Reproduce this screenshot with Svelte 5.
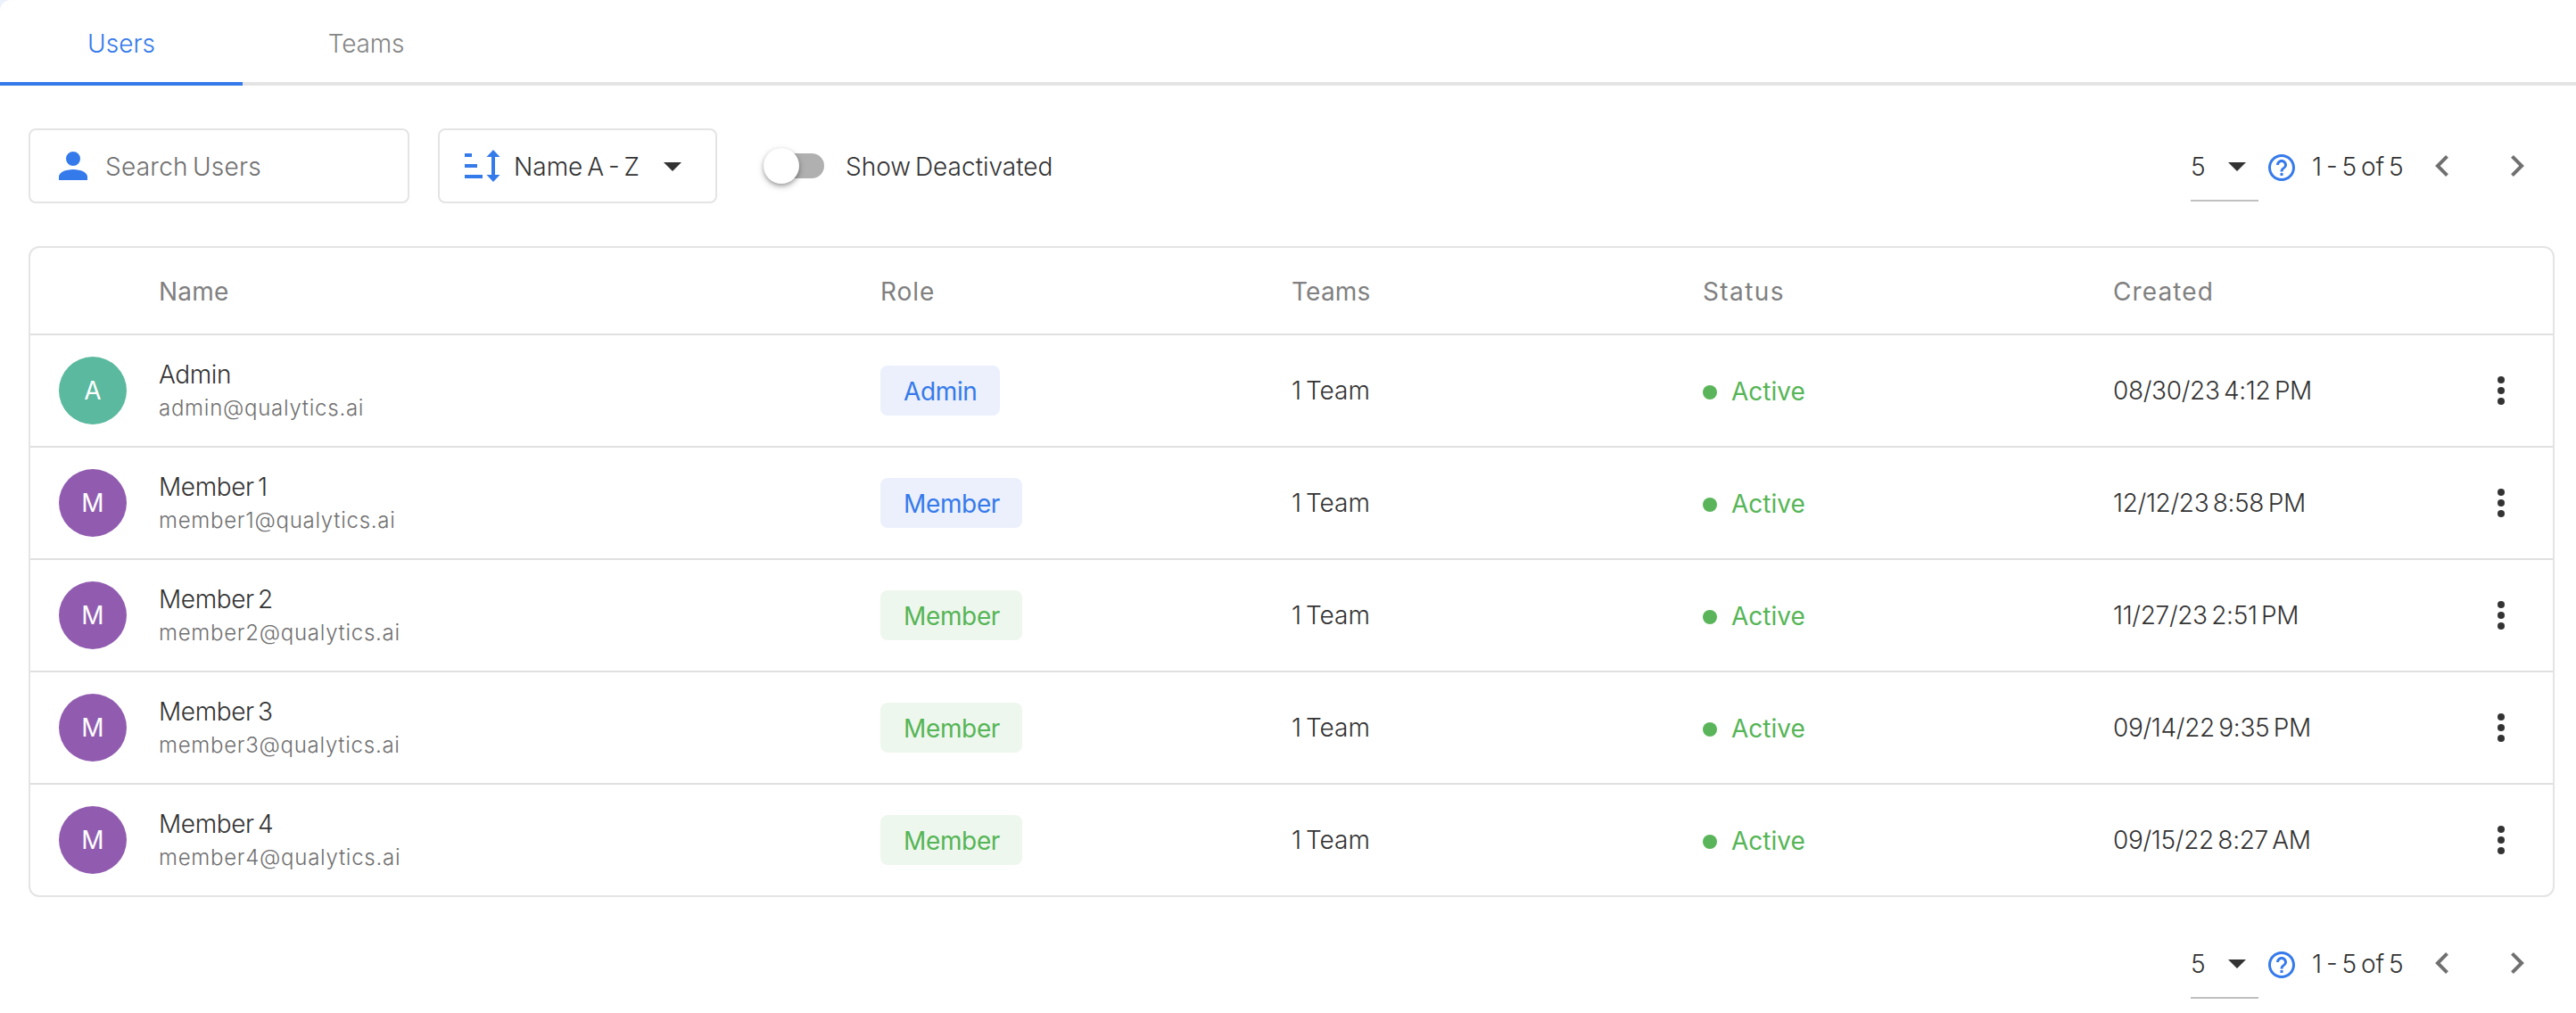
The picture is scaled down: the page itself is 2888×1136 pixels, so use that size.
<script>
  const columns = ['Name', 'Role', 'Teams', 'Status', 'Created'];
  const users = [
    { name: 'Admin', email: 'admin@qualytics.ai', initial: 'A', avatar: 'teal', role: 'Admin', tone: 'blue', created: '08/30/23 4:12 PM' },
    { name: 'Member 1', email: 'member1@qualytics.ai', initial: 'M', avatar: 'purple', role: 'Member', tone: 'blue', created: '12/12/23 8:58 PM' },
    { name: 'Member 2', email: 'member2@qualytics.ai', initial: 'M', avatar: 'purple', role: 'Member', tone: 'green', created: '11/27/23 2:51 PM' },
    { name: 'Member 3', email: 'member3@qualytics.ai', initial: 'M', avatar: 'purple', role: 'Member', tone: 'green', created: '09/14/22 9:35 PM' },
    { name: 'Member 4', email: 'member4@qualytics.ai', initial: 'M', avatar: 'purple', role: 'Member', tone: 'green', created: '09/15/22 8:27 AM' }
  ];
</script>

{#snippet pager()}
  <div class="pager">
    <div class="size">
      <span>5</span>
      <svg class="caret" viewBox="0 0 20 10"><path d="M0 0H20L10 10Z" /></svg>
    </div>
    <svg class="help" viewBox="2 2 20 20"><path d="M11 18h2v-2h-2v2zm1-16C6.48 2 2 6.48 2 12s4.48 10 10 10 10-4.480 10-10S17.520 2 12 2zm0 18c-4.410 0-8-3.590-8-8s3.590-8 8-8 8 3.590 8 8-3.590 8-8 8zm0-14c-2.210 0-4 1.790-4 4h2c0-1.100.9-2 2-2s2 .9 2 2c0 2-3 1.750-3 5h2c0-2.250 3-2.500 3-5 0-2.210-1.790-4-4-4z" /></svg>
    <span class="range">1 - 5 of 5</span>
    <svg class="chev prev" viewBox="8 6 7.410 12"><path d="M15.410 16.580L10.830 12l4.580-4.590L14 6l-6 6 6 6 1.410-1.420z" /></svg>
    <svg class="chev" viewBox="8.590 6 7.410 12"><path d="M8.590 16.580L13.170 12 8.590 7.410 10 6l6 6-6 6-1.410-1.420z" /></svg>
  </div>
{/snippet}

<div class="page">
  <nav class="tabs">
    <div class="tab active"><span>Users</span></div>
    <div class="tab second"><span>Teams</span></div>
  </nav>

  <div class="toolbar">
    <div class="box search">
      <svg class="person" viewBox="4 4 16 16"><path d="M12 4a4 4 0 0 1 4 4 4 4 0 0 1-4 4 4 4 0 0 1-4-4 4 4 0 0 1 4-4m0 10c4.420 0 8 1.790 8 4v2H4v-2c0-2.210 3.580-4 8-4z" /></svg>
      <span>Search Users</span>
    </div>
    <div class="box sort">
      <svg class="sorticon" viewBox="0 0 40 36"><path d="M0 4h8v4H0zM0 16h14v4H0zM0 28h20v4H0zM32 0l7.500 8H34v20h5.500L32 36l-7.500-8H30V8h-5.500z" /></svg>
      <span>Name A - Z</span>
      <svg class="caret" viewBox="0 0 20 10"><path d="M0 0H20L10 10Z" /></svg>
    </div>
    <div class="switch"><i></i></div>
    <span class="show">Show Deactivated</span>
    {@render pager()}
  </div>

  <div class="table">
    <div class="row head">
      <span></span>
      {#each columns as c}<span class={c.toLowerCase()}>{c}</span>{/each}
    </div>
    {#each users as u}
      <div class="row">
        <div class="avatar {u.avatar}"><span>{u.initial}</span></div>
        <div class="who">
          <span class="fullname">{u.name}</span>
          <span class="email">{u.email}</span>
        </div>
        <div><span class="chip {u.tone}">{u.role}</span></div>
        <span>1 Team</span>
        <div class="state"><i></i><span>Active</span></div>
        <span class="date">{u.created}</span>
        <svg class="kebab" viewBox="0 0 8 32"><circle cx="4" cy="4" r="4" /><circle cx="4" cy="16" r="4" /><circle cx="4" cy="28" r="4" /></svg>
      </div>
    {/each}
  </div>

  <div class="footer">{@render pager()}</div>
</div>

<style>
  :global(body) { background: #ecf1fc; }
  .page {
    height: 1136px;
    background: #fff;
    border-top-left-radius: 12px;
    font-family: Inter, 'Liberation Sans', sans-serif;
    font-weight: 300;
    font-size: 28px;
    line-height: 36px;
    word-spacing: -3px;
    color: #333;
    overflow: hidden;
    white-space: nowrap;
  }
  svg { display: block; flex: none; fill: #333; }
  .tabs { display: flex; height: 92px; border-bottom: 4px solid #e4e4e4; color: #858585; }
  .tab { width: 272px; height: 96px; display: flex; justify-content: center; padding-top: 31px; box-sizing: border-box; }
  .second { padding-left: 5px; letter-spacing: -.2px; }
  .active { color: #357aeb; border-bottom: 4px solid #357aeb; }
  .toolbar { display: flex; align-items: center; height: 84px; padding: 48px 0 0 32px; }
  .box { box-sizing: border-box; height: 84px; border: 2px solid #e4e4e4; border-radius: 8px; display: flex; align-items: center; }
  .search { width: 427px; padding-left: 32px; color: #707070; letter-spacing: .25px; }
  .search span, .show, .range { padding-top: 2px; }
  .person { width: 32px; height: 32px; fill: #357aeb; margin-right: 20px; }
  .sort { width: 313px; margin-left: 32px; padding-left: 28px; }
  .sorticon { width: 40px; height: 36px; fill: #357aeb; margin-right: 15px; }
  .caret { width: 20px; height: 10px; }
  .sort span { width: 168px; padding-top: 2px; }
  .sort .caret { margin-top: 2px; }
  .switch { width: 64px; height: 28px; margin-left: 56px; border-radius: 14px; background: #b0b0b0; }
  .switch i { display: block; width: 40px; height: 40px; margin: -6px 0 0 -4px; border-radius: 50%; background: #fff; box-shadow: 0 4px 8px -2px rgba(0,0,0,.2), 0 2px 4px rgba(0,0,0,.22), 0 2px 10px rgba(0,0,0,.1); }
  .show { margin-left: 24px; }
  .pager { display: flex; align-items: center; height: 84px; margin-left: auto; padding-right: 58px; }
  .size { width: 76px; height: 80px; padding-top: 4px; box-sizing: border-box; border-bottom: 2px solid #c0c0c0; display: flex; align-items: center; }
  .size span { width: 42px; }
  .help { width: 30px; height: 30px; margin: 4px 0 0 11px; fill: #357aeb; }
  .range { width: 138px; margin-left: 19px; }
  .chev { width: 15px; height: 24px; fill: #707070; }
  .prev { margin-right: 70px; }
  .table { margin: 48px 24px 0 32px; height: 726px; border: 2px solid #e4e4e4; border-radius: 12px; }
  .row { box-sizing: border-box; height: 126px; display: grid; grid-template-columns: 112px 809px 461px 461px 460px 431px 1fr; align-items: center; padding-left: 32px; border-bottom: 2px solid #e0e0e0; }
  .row:last-child { border-bottom-color: transparent; }
  .head { height: 98px; padding-top: 2px; color: #808080; font-weight: 400; }
  .name { letter-spacing: .2px; }
  .role { letter-spacing: .9px; }
  .teams { letter-spacing: .2px; }
  .status { letter-spacing: 1.4px; }
  .created { letter-spacing: 1.1px; }
  .avatar { width: 76px; height: 76px; border-radius: 50%; color: #fff; font-weight: 400; display: flex; align-items: center; justify-content: center; }
  .teal { background: #5ab99e; }
  .purple { background: #915cb0; }
  .who { display: flex; flex-direction: column; gap: 2px; padding-top: 2px; }
  .fullname { letter-spacing: -.4px; }
  .email { font-size: 24px; letter-spacing: .74px; color: #707070; }
  .chip { display: inline-block; height: 56px; line-height: 58px; padding: 0 25px 0 26px; border-radius: 8px; font-weight: 400; letter-spacing: -.35px; vertical-align: middle; }
  .blue { background: #ebf0fc; color: #357aeb; }
  .green { background: #eef7ee; color: #56b556; }
  .state { display: flex; align-items: center; padding-top: 2px; color: #56b556; font-weight: 400; }
  .state i { width: 16px; height: 16px; margin: 2px 16px 0 0; border-radius: 50%; background: #5ab55a; }
  .date { letter-spacing: -.35px; }
  .kebab { width: 8px; height: 32px; }
  .footer { display: flex; padding-top: 32px; }
</style>
